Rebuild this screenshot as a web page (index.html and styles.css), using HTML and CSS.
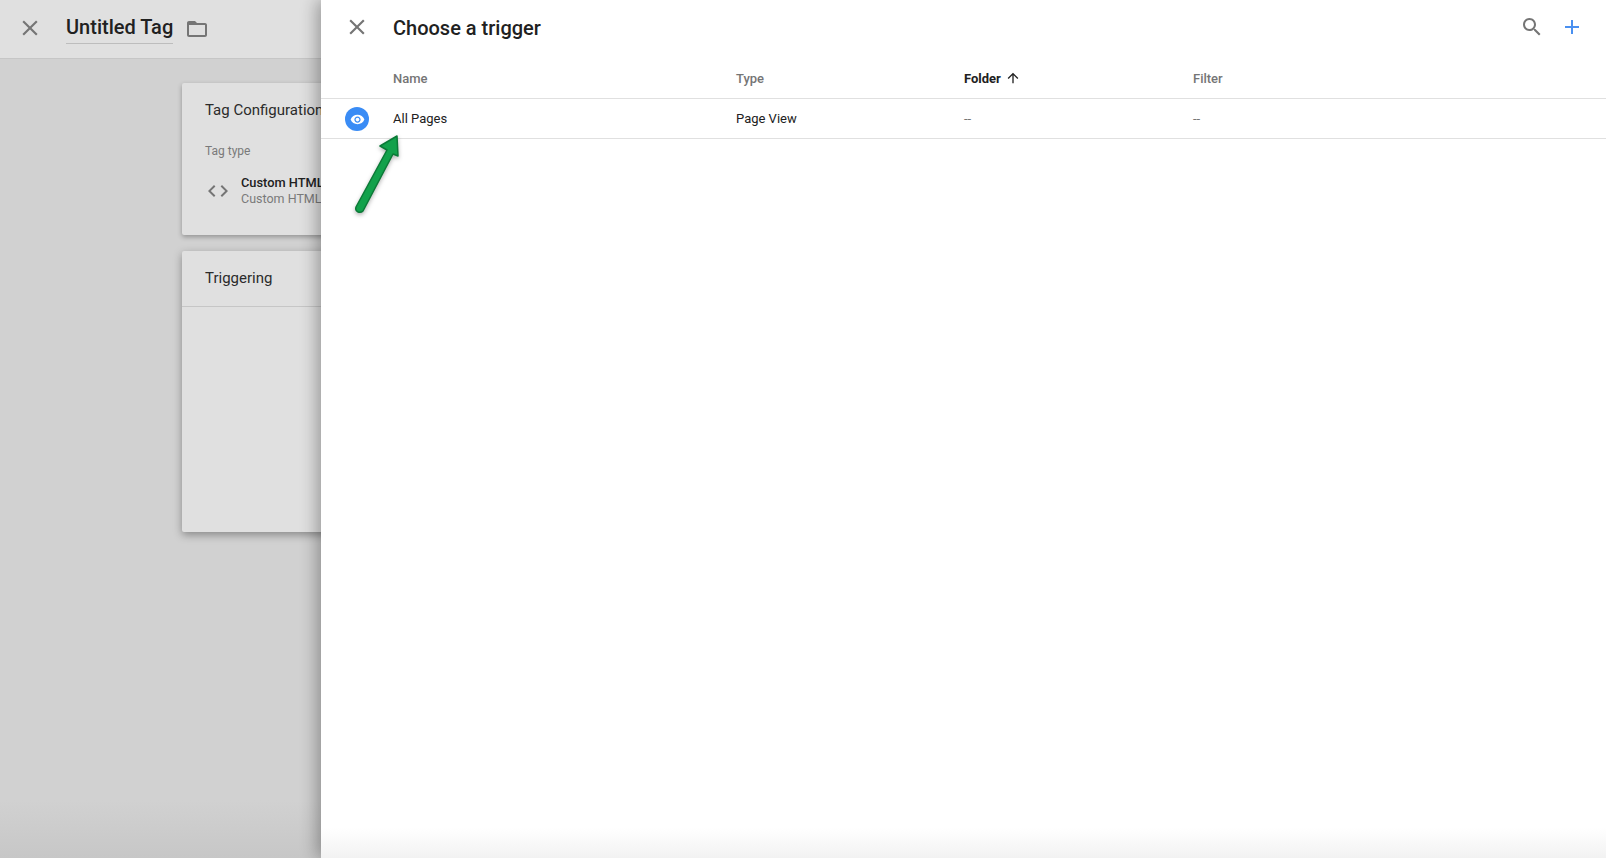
FILE: index.html
```html
<!DOCTYPE html>
<html lang="en">
<head>
    <meta charset="UTF-8">
    <meta name="viewport" content="width=device-width, initial-scale=1.0">
    <title>Choose a trigger</title>
    <link rel="stylesheet" href="styles.css">
</head>
<body>
    <div class="page">
        <header class="topbar">
            <svg class="icon close-icon" viewBox="0 0 24 24"><path d="M19 6.400 17.600 5 12 10.600 6.400 5 5 6.400 10.600 12 5 17.600 6.400 19 12 13.400 17.600 19 19 17.600 13.400 12z"/></svg>
            <h1 class="tag-title">Untitled Tag</h1>
            <svg class="icon folder-icon" viewBox="0 0 24 24"><path d="M20 6h-8l-2-2H4c-1.100 0-2 .9-2 2v12c0 1.100.9 2 2 2h16c1.100 0 2-.9 2-2V8c0-1.100-.9-2-2-2zm0 12H4V8h16v10z"/></svg>
        </header>
        <main class="cards">
            <section class="card config-card">
                <h2 class="card-title">Tag Configuration</h2>
                <div class="field-label">Tag type</div>
                <div class="tag-type">
                    <svg class="icon code-icon" viewBox="0 0 24 24"><path d="M9.400 16.600 4.800 12l4.600-4.600L8 6l-6 6 6 6zm5.200 0 4.600-4.600-4.600-4.600L16 6l6 6-6 6z"/></svg>
                    <div>
                        <div class="type-name">Custom HTML</div>
                        <div class="type-sub">Custom HTML</div>
                    </div>
                </div>
            </section>
            <section class="card trigger-card">
                <h2 class="card-title trigger-title">Triggering</h2>
            </section>
        </main>
    </div>

    <aside class="panel">
        <header class="panel-head">
            <svg class="icon close-icon" viewBox="0 0 24 24"><path d="M19 6.400 17.600 5 12 10.600 6.400 5 5 6.400 10.600 12 5 17.600 6.400 19 12 13.400 17.600 19 19 17.600 13.400 12z"/></svg>
            <h1 class="panel-title">Choose a trigger</h1>
            <svg class="icon search-icon" viewBox="0 0 24 24"><path d="M15.500 14h-.8l-.3-.3c1-1.100 1.600-2.600 1.600-4.200C16 5.900 13.100 3 9.500 3S3 5.900 3 9.500 5.900 16 9.500 16c1.600 0 3.100-.6 4.200-1.600l.3.3v.8l5 5 1.500-1.500-5-5zm-6 0C7 14 5 12 5 9.500S7 5 9.500 5 14 7 14 9.500 12 14 9.500 14z"/></svg>
            <svg class="icon plus-icon" viewBox="0 0 24 24"><path d="M19 13h-6v6h-2v-6H5v-2h6V5h2v6h6z"/></svg>
        </header>
        <div class="table-row table-head">
            <div class="col-name">Name</div>
            <div class="col-type">Type</div>
            <div class="col-folder sorted">Folder
                <svg class="sort-icon" viewBox="0 0 24 24"><path d="M4 12l1.400 1.400L11 7.800V20h2V7.800l5.600 5.600L20 12l-8-8z"/></svg>
            </div>
            <div class="col-filter">Filter</div>
        </div>
        <div class="table-row table-item">
            <div class="trigger-badge">
                <svg viewBox="0 0 24 24"><path d="M12 4.500C7 4.500 2.700 7.600 1 12c1.700 4.400 6 7.500 11 7.500s9.300-3.100 11-7.500c-1.700-4.400-6-7.500-11-7.500zM12 17c-2.800 0-5-2.200-5-5s2.200-5 5-5 5 2.200 5 5-2.200 5-5 5zm0-8c-1.700 0-3 1.300-3 3s1.300 3 3 3 3-1.300 3-3-1.300-3-3-3z"/></svg>
            </div>
            <div class="col-name">All Pages</div>
            <div class="col-type">Page View</div>
            <div class="col-folder muted">--</div>
            <div class="col-filter muted">--</div>
        </div>
        <div class="panel-fade"></div>
    </aside>

    <!-- annotation arrow, sits on top of everything -->
    <svg class="arrow" width="60" height="90" viewBox="0 0 60 90">
        <path d="M45 9 28 19 35 23 4 80Q3 84 6 85 9 86 11 84L41 27 46 29Z" fill="#12a14b" stroke="#0b7a37" stroke-width="1.500" stroke-linejoin="round"/>
    </svg>
</body>
</html>
```

FILE: styles.css
```css
html, body {
    height: 100%;
}
body {
    margin: 0;
    font-family: Roboto, 'Liberation Sans', sans-serif;
    color: #212121;
    background: linear-gradient(#d1d1d1 0, #d1d1d1 800px, #c7c7c7 858px);
    overflow: hidden;
}
h1, h2 {
    margin: 0;
    font-weight: 500;
}
.icon {
    display: block;
    flex: none;
    fill: #757575;
}
.page {
    height: 858px;
}
.topbar {
    height: 58px;
    display: flex;
    align-items: center;
    background: #e0e0e0;
    border-bottom: 1px solid #c6c6c6;
    padding-left: 17px;
}
.close-icon {
    width: 26px;
    height: 26px;
    margin-top: -2px;
}
.tag-title {
    margin-left: 23px;
    margin-top: -2px;
    font-size: 20px;
    line-height: 31px;
    border-bottom: 1px solid #bdbdbd;
}
.folder-icon {
    width: 24px;
    height: 24px;
    margin-left: 12px;
}
.cards {
    padding: 24px 0 0 182px;
}
.card {
    width: 900px;
    background: #e0e0e0;
    border-radius: 2px;
    box-shadow: 0 2px 5px rgba(0, 0, 0, 0.3);
}
.config-card {
    height: 152px;
    padding: 17px 23px 0;
    box-sizing: border-box;
}
.card-title {
    font-size: 15px;
    font-weight: 400;
    line-height: 20px;
    color: #2b2b2b;
}
.field-label {
    margin-top: 23px;
    font-size: 12px;
    line-height: 16px;
    color: #7a7a7a;
}
.tag-type {
    display: flex;
    align-items: center;
    margin-top: 16px;
}
.code-icon {
    width: 24px;
    height: 24px;
    margin-left: 1px;
    margin-right: 11px;
}
.type-name {
    font-size: 12.800px;
    font-weight: 500;
    line-height: 16px;
}
.type-sub {
    font-size: 12.500px;
    line-height: 16px;
    color: #7a7a7a;
}
.trigger-card {
    height: 281px;
    margin-top: 16px;
    box-shadow: 0 3px 8px rgba(0, 0, 0, 0.35);
}
.trigger-title {
    height: 56px;
    padding: 17px 23px 0;
    box-sizing: border-box;
    border-bottom: 1px solid #c6c6c6;
}

.panel {
    position: absolute;
    top: 0;
    left: 321px;
    right: 0;
    bottom: 0;
    background: #fff;
    box-shadow: -4px 0 16px rgba(0, 0, 0, 0.32);
}
.panel-head {
    height: 56px;
    display: flex;
    align-items: center;
    padding: 0 22px 0 23px;
}
.panel-title {
    margin-left: 23px;
    font-size: 20px;
    flex: 1;
}
.search-icon {
    width: 24px;
    height: 24px;
    margin-right: 16px;
    margin-top: -2px;
}
.plus-icon {
    width: 24px;
    height: 24px;
    margin-top: -2px;
    fill: #4a90f0;
}
.table-row {
    position: relative;
    display: flex;
    align-items: center;
    padding-left: 72px;
    font-size: 13px;
    border-bottom: 1px solid #e0e0e0;
    box-sizing: border-box;
}
.table-head {
    height: 43px;
    padding-top: 2px;
    font-weight: 500;
    color: #757575;
}
.table-item {
    height: 40px;
    color: #212121;
}
.col-name {
    width: 343px;
}
.col-type {
    width: 228px;
}
.col-folder {
    width: 229px;
    display: flex;
    align-items: center;
    gap: 4px;
}
.sorted {
    color: #212121;
    font-weight: 700;
}
.muted {
    color: #757575;
}
.sort-icon {
    width: 16px;
    height: 16px;
    fill: #212121;
}
.trigger-badge {
    position: absolute;
    left: 24px;
    top: 8px;
    width: 24px;
    height: 24px;
    border-radius: 50%;
    background: #3a8cf5;
    display: flex;
    align-items: center;
    justify-content: center;
}
.trigger-badge svg {
    width: 15px;
    height: 15px;
    fill: #fff;
}
.panel-fade {
    position: absolute;
    left: 0;
    right: 0;
    bottom: 0;
    height: 30px;
    background: linear-gradient(rgba(242, 242, 242, 0), #f2f2f2);
}
.arrow {
    position: absolute;
    left: 352px;
    top: 127px;
    filter: drop-shadow(0 2px 2px rgba(0, 0, 0, 0.3));
}
```
